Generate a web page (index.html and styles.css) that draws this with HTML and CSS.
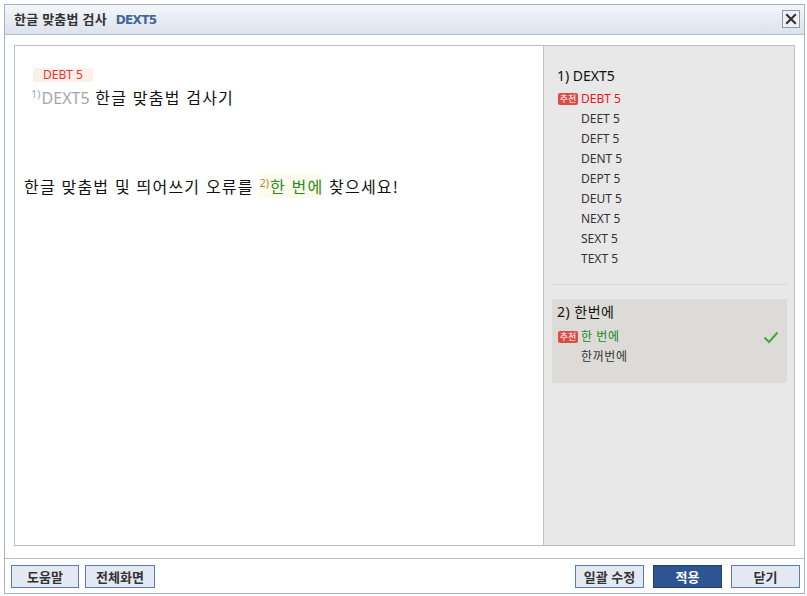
FILE: index.html
```html
<!DOCTYPE html>
<html lang="ko">
<head>
<meta charset="utf-8">
<title>한글 맞춤법 검사</title>
<link rel="stylesheet" href="styles.css">
</head>
<body>
<div class="dialog">
  <div class="header">
    <div class="title">한글 맞춤법 검사 <span class="brand">DEXT5</span></div>
    <button class="close" aria-label="닫기">
      <svg width="12" height="12" viewBox="0 0 12 12"><path d="M2 2 L10 10 M10 2 L2 10" stroke="#333" stroke-width="2.2" stroke-linecap="square"/></svg>
    </button>
  </div>
  <div class="content">
    <div class="box">
      <div class="editor">
        <span class="hint">DEBT 5</span>
        <p class="line line1"><sup class="sup">1)</sup><span class="err">DEXT5</span> 한글 맞춤법 검사기</p>
        <p class="line line2">한글 맞춤법 및 띄어쓰기 오류를 <span class="fix"><sup class="sup2">2)</sup>한 번에</span> 찾으세요!</p>
      </div>
      <div class="side">
        <div class="section first">
          <div class="stitle">1) DEXT5</div>
          <ul class="items">
            <li class="rec red"><span class="tag">추천</span>DEBT 5</li>
            <li>DEET 5</li>
            <li>DEFT 5</li>
            <li>DENT 5</li>
            <li>DEPT 5</li>
            <li>DEUT 5</li>
            <li>NEXT 5</li>
            <li>SEXT 5</li>
            <li>TEXT 5</li>
          </ul>
        </div>
        <div class="section active">
          <div class="stitle">2) 한번에</div>
          <ul class="items">
            <li class="rec green"><span class="tag">추천</span>한 번에
              <svg class="check" width="16" height="13" viewBox="0 0 16 13"><path d="M1.5 6.5 L6 11 L14.5 1.5" fill="none" stroke="#3aa93a" stroke-width="2"/></svg>
            </li>
            <li>한꺼번에</li>
          </ul>
        </div>
      </div>
    </div>
  </div>
  <div class="footer">
    <div class="group">
      <button class="btn">도움말</button>
      <button class="btn">전체화면</button>
    </div>
    <div class="group right">
      <button class="btn">일괄 수정</button>
      <button class="btn primary">적용</button>
      <button class="btn">닫기</button>
    </div>
  </div>
</div>
</body>
</html>
```
FILE: styles.css
```css
* { box-sizing: border-box; }
html, body { margin: 0; padding: 0; background: #fff; }
body {
  font-family: "Noto Sans", "Noto Sans CJK KR", sans-serif;
  color: #222;
}
.dialog {
  margin: 4px 2px 2px 4px;
  width: 801px;
  height: 590px;
  border: 1px solid #a7b1c3;
  display: flex;
  flex-direction: column;
  background: #fff;
}
.header {
  height: 30px;
  flex: none;
  border-bottom: 1px solid #b4bccb;
  background: linear-gradient(#f4f6fa, #dce2ec);
  display: flex;
  align-items: center;
  justify-content: space-between;
  padding: 0 4px 0 9px;
}
.title {
  font-family: "Noto Sans CJK KR", sans-serif;
  font-weight: bold;
  font-size: 13px;
  color: #333;
  letter-spacing: 0.2px;
  margin-top: -2px;
}
.brand {
  color: #41679c;
  margin-left: 5px;
  font-family: "DejaVu Sans", sans-serif;
  font-size: 12px;
  letter-spacing: -0.6px;
}
.close {
  width: 18px;
  height: 18px;
  padding: 0;
  border: 1px solid #8e98aa;
  background: #eef1f6;
  display: flex;
  align-items: center;
  justify-content: center;
  margin-top: -1px;
}
.content {
  flex: 1;
  padding: 10px 9px 12px 9px;
  display: flex;
}
.box {
  flex: 1;
  border: 1px solid #bdbdbd;
  display: flex;
}
.editor {
  flex: none;
  width: 529px;
  border-right: 1px solid #c4c4c4;
  padding: 22px 9px 0 9px;
  font-family: "Noto Sans CJK KR", sans-serif;
}
.hint {
  display: block;
  width: fit-content;
  margin-left: 9px;
  height: 14px;
  line-height: 14px;
  padding: 0 10px;
  background: #fdefe9;
  color: #e8342e;
  font-family: "Noto Sans", sans-serif;
  font-size: 12px;
  border-radius: 2px;
}
.line {
  margin: 0;
  font-size: 16px;
  line-height: 20px;
  color: #111;
  letter-spacing: 1.2px;
}
.line1 { margin-left: 7px; margin-top: 5px; }
.line2 { margin-top: 68px; }
.sup, .sup2 {
  font-family: "Noto Sans", sans-serif;
  font-size: 11px;
  vertical-align: 6px;
  line-height: 0;
  margin-right: 1px;
  letter-spacing: 0;
}
.sup { color: #aaa; }
.err {
  color: #a6a6a6;
  font-family: "Noto Sans", sans-serif;
  letter-spacing: 0;
}
.fix {
  background: #fffbec;
  color: #1f8a1f;
}
.sup2 { color: #b08a1a; }
.side {
  flex: 1;
  background: #e8e8e8;
  padding: 0 7px 0 8px;
  font-family: "Noto Sans", "Noto Sans CJK KR", sans-serif;
}
.section { padding: 0 5px; }
.section.first {
  padding-top: 20px;
  padding-bottom: 15px;
  border-bottom: 1px solid #d6d6d6;
  margin-bottom: 14px;
}
.section.active {
  background: #dddbd8;
  padding-top: 3px;
  padding-bottom: 16px;
}
.stitle {
  font-size: 14px;
  line-height: 20px;
  color: #111;
}
.active .stitle { margin-bottom: 5px; letter-spacing: 0.5px; }
.first .stitle { margin-bottom: 3px; }
.items {
  list-style: none;
  margin: 0;
  padding: 0;
}
.items li {
  position: relative;
  font-size: 12px;
  line-height: 20px;
  height: 20px;
  padding-left: 24px;
  color: #333;
  display: flex;
  align-items: center;
}
.active .items li { letter-spacing: 0.6px; }
.items li.rec { padding-left: 1px; }
.tag {
  display: inline-block;
  width: 20px;
  height: 12px;
  line-height: 12px;
  margin-right: 3px;
  background: #de4a45;
  color: #fff;
  font-family: "Noto Sans CJK KR", sans-serif;
  font-size: 9px;
  text-align: center;
  border-radius: 2px;
  letter-spacing: 0;
}
.red { color: #f0101a !important; }
.green { color: #17891b !important; }
.check {
  position: absolute;
  right: 3px;
  top: 4px;
}
.footer {
  flex: none;
  height: 35px;
  border-top: 1px solid #b7bfcc;
  display: flex;
  justify-content: space-between;
  align-items: flex-start;
  padding: 6px 4px 0 6px;
}
.group { display: flex; gap: 6px; }
.group.right { gap: 9px; }
.btn {
  height: 23px;
  min-width: 68px;
  padding: 0;
  border: 1px solid #5d7bb0;
  background: #e3e9f3;
  color: #333;
  font-family: "Noto Sans CJK KR", sans-serif;
  font-weight: bold;
  font-size: 13px;
  line-height: 20px;
  white-space: nowrap;
}
.group.right .btn { width: 69px; }
.group:first-child .btn:nth-child(2) { width: 70px; }
.btn.primary {
  background: #2c5592;
  border-color: #1f3e70;
  color: #fff;
}
```
